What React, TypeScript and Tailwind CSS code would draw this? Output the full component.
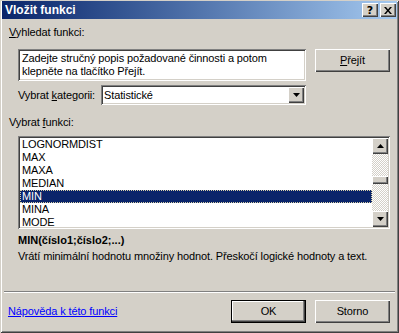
import React from "react";

const raised =
  "shadow-[inset_1px_1px_0_#fff,inset_-1px_-1px_0_#404040,inset_-2px_-2px_0_#808080]";
const sunken =
  "shadow-[inset_1px_1px_0_#808080,inset_-1px_-1px_0_#fff,inset_2px_2px_0_#404040,inset_-2px_-2px_0_#d4d0c8]";

const functions = ["LOGNORMDIST", "MAX", "MAXA", "MEDIAN", "MIN", "MINA", "MODE"];

const Arrow = ({ up }: { up?: boolean }) => (
  <svg width="7" height="4" viewBox="0 0 7 4" className="block">
    {up ? <path d="M3.5 0 L7 4 L0 4 Z" fill="#000" /> : <path d="M0 0 L7 0 L3.5 4 Z" fill="#000" />}
  </svg>
);

function Button({ children, isDefault }: { children: React.ReactNode; isDefault?: boolean }) {
  return (
    <div
      className={`w-[75px] h-[23px] flex items-center justify-center bg-[#d4d0c8] ${
        isDefault
          ? "shadow-[inset_0_0_0_1px_#000,inset_-2px_-2px_0_#404040,inset_-3px_-3px_0_#808080,inset_2px_2px_0_#fff]"
          : raised
      }`}
    >
      {children}
    </div>
  );
}

export default function App() {
  return (
    <div className="w-[399px] h-[333px] bg-[#d4d0c8] flex flex-col text-black text-[11px] leading-[13px] tracking-[-0.12px] font-['Liberation_Sans',Arial,sans-serif] shadow-[inset_1px_1px_0_#d4d0c8,inset_-1px_-1px_0_#404040,inset_2px_2px_0_#fff,inset_-2px_-2px_0_#808080]">
      {/* title bar */}
      <div className="mt-[1px] mx-[2px] h-[18px] flex items-center justify-between bg-linear-to-r from-[#0a246a] to-[#a6caf0] pl-[3px] pr-[1px]">
        <span className="text-white font-bold text-[12px] tracking-normal">Vložit funkci</span>
        <div className="flex gap-[2px]">
          <div className={`w-[16px] h-[14px] bg-[#d4d0c8] flex items-center justify-center ${raised}`}>
            <span className="font-bold text-[11px] leading-[11px] font-['DejaVu_Sans',sans-serif]">?</span>
          </div>
          <div className={`w-[16px] h-[14px] bg-[#d4d0c8] flex items-center justify-center ${raised}`}>
            <svg width="8" height="7" viewBox="0 0 8 7" className="block">
              <path d="M0 0h2l2 2.5L6 0h2L5 3.5 8 7H6L4 4.5 2 7H0l3-3.5z" fill="#000" />
            </svg>
          </div>
        </div>
      </div>

      <div className="mt-[7px] pl-[9px]">
        <u>V</u>yhledat funkci:
      </div>

      <div className="mt-[10px] pl-[18px] flex items-start">
        <div className={`w-[288px] h-[32px] bg-white pl-[4px] pt-[3px] ${sunken}`}>
          Zadejte stručný popis požadované činnosti a potom
          <br />
          klepněte na tlačítko Přejít.
        </div>
        <div className="ml-[9px]">
          <Button>
            <span>
              <u>P</u>řejít
            </span>
          </Button>
        </div>
      </div>

      <div className="mt-[4px] pl-[18px] flex items-center h-[20px]">
        <div className="w-[83px]">
          Vybrat <u>k</u>ategorii:
        </div>
        <div className={`w-[205px] h-[20px] bg-white flex items-center p-[2px] ${sunken}`}>
          <span className="flex-1 pl-[1px]">Statistické</span>
          <div className={`w-[16px] h-[16px] bg-[#d4d0c8] flex items-center justify-center ${raised}`}>
            <Arrow />
          </div>
        </div>
      </div>

      <div className="mt-[11px] pl-[9px]">
        Vybrat <u>f</u>unkci:
      </div>

      <div className={`mt-[7px] ml-[18px] w-[372px] h-[93px] bg-white p-[2px] flex ${sunken}`}>
        <div className="flex-1 overflow-hidden">
          {functions.map((f) => (
            <div
              key={f}
              className={`h-[13px] leading-[13px] pl-[2px] ${
                f === "MIN"
                  ? "bg-[#0a246a] text-white outline outline-1 outline-dotted outline-[#d8d0a8] -outline-offset-1"
                  : ""
              }`}
            >
              {f}
            </div>
          ))}
        </div>
        <div className="w-[16px] flex flex-col">
          <div className={`h-[16px] bg-[#d4d0c8] flex items-center justify-center ${raised}`}>
            <Arrow up />
          </div>
          <div className="flex-1 bg-[repeating-conic-gradient(#d4d0c8_0_25%,#fff_0_50%)] bg-[length:2px_2px]">
            <div className={`mt-[22px] h-[8px] bg-[#d4d0c8] ${raised}`} />
          </div>
          <div className={`h-[16px] bg-[#d4d0c8] flex items-center justify-center ${raised}`}>
            <Arrow />
          </div>
        </div>
      </div>

      <div className="mt-[5px] pl-[18px] font-bold tracking-normal">MIN(číslo1;číslo2;...)</div>
      <div className="mt-[3px] pl-[18px]">
        Vrátí minimální hodnotu množiny hodnot. Přeskočí logické hodnoty a text.
      </div>

      <div className="mt-[28px] mx-[4px] h-[2px] border-t border-t-[#808080] border-b border-b-white" />

      <div className="mt-[7px] flex items-center h-[23px] pl-[8px] pr-[9px] gap-[9px]">
        <span className="flex-1 text-[#0000ff] underline">Nápověda k této funkci</span>
        <Button isDefault>OK</Button>
        <Button>Storno</Button>
      </div>
    </div>
  );
}
